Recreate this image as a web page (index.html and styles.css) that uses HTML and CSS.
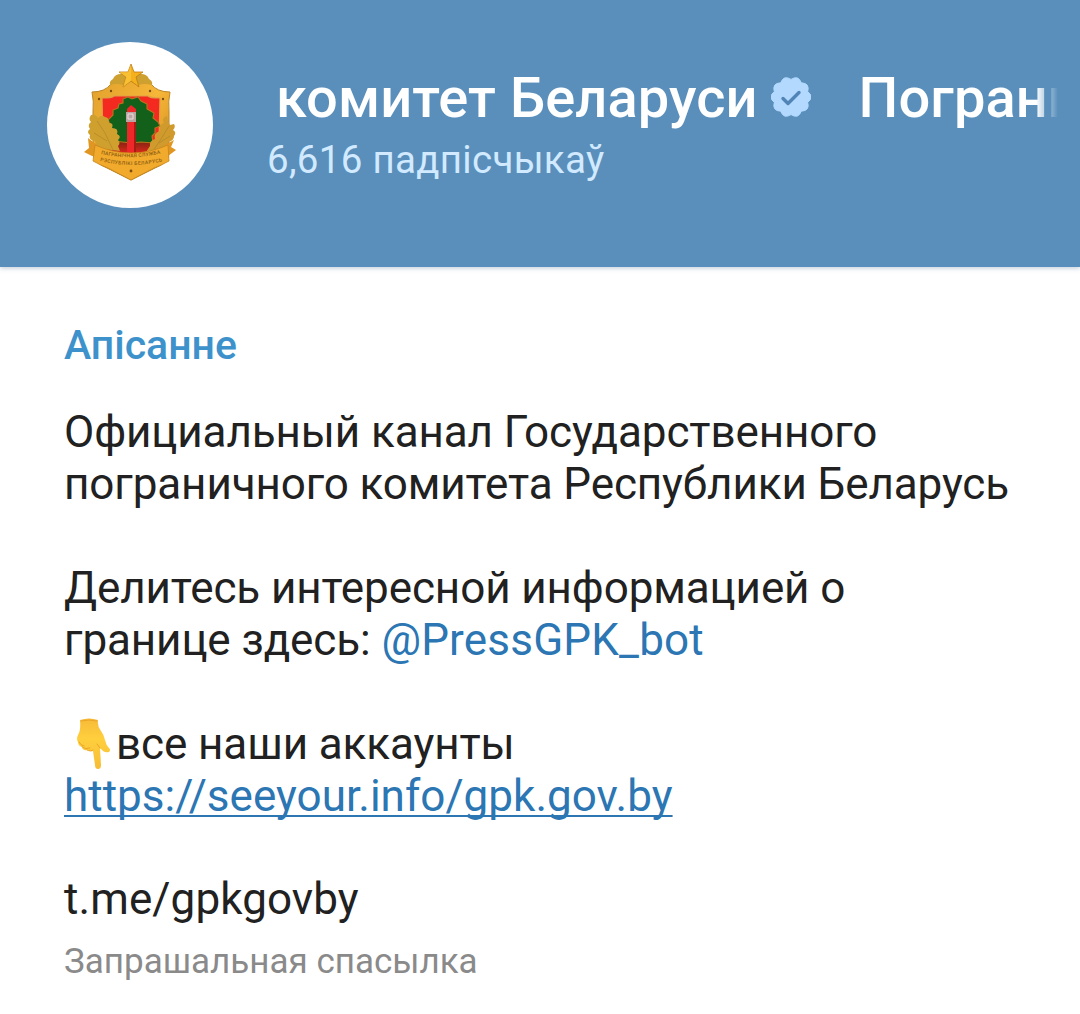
FILE: index.html
```html
<!DOCTYPE html>
<html lang="be">
<head>
  <meta charset="UTF-8" />
  <meta name="viewport" content="width=device-width, initial-scale=1.0" />
  <title>Пограничный комитет Беларуси</title>
  <link rel="stylesheet" href="styles.css">
</head>
<body>
  <header class="header">
    <svg class="avatar" viewBox="0 0 166 166">
      <defs>
        <linearGradient id="gold" x1="0" y1="0" x2="1" y2="1">
          <stop offset="0" stop-color="#e0a02c" />
          <stop offset="0.5" stop-color="#f6b638" />
          <stop offset="1" stop-color="#c98218" />
        </linearGradient>
        <linearGradient id="ground" x1="0" y1="0" x2="0" y2="1">
          <stop offset="0" stop-color="#7c2410" />
          <stop offset="1" stop-color="#e5281c" />
        </linearGradient>
      </defs>
      <circle cx="83" cy="83" r="83" fill="#fff" />
      <!-- shield -->
      <path d="M64 42q10-7 20-7t20 7q6 8 19 8-2 9-1 20v42q-1 9-14 14l-24 12-24-12q-13-5-14-14V70q1-11-1-20 13 0 19-8z" fill="url(#gold)" stroke="#b98528" stroke-width="1" />
      <path d="M63 43q-1-4 3-6 2-5 8-5 4-2 7 2l5 0q4-4 8-2 6 0 8 5 4 2 3 6-8-2-13 0l-8-3-8 3q-6-2-13 0z" fill="#cda030" />
      <path d="M67 54H101q2 2 12 2l-1 44q-3 6-6 10H63q-6-4-7-10L55 56q10 0 12-2z" fill="#f42a20" stroke="#dfa047" stroke-width="1.2" />
      <path d="M62 100l12-1h22l14 2-7 11H66z" fill="url(#ground)" />
      <path d="M76 57l5-2 4 2 6-2 3 4 6 3 0 5 7 4-1 5 5 4 2 4-5 2 0 5-3 3 1 7-12-1-10 1-17-2-2-8-5-4 3-5-2-4 5-5 0-5 5-2 1-4 4-1z" fill="#12601a" stroke="#b8741c" stroke-width="1.1" />
      <path d="M80 112V67l4-4 5 4v45z" fill="#ee2828" />
      <path d="M87 80h2v32h-2z" fill="#a81a14" />
      <path d="M79 70h10v10H79z" fill="#bba5a2" />
      <path d="M81 72h5v5h-5z" fill="none" stroke="#e8dedc" />
      <!-- oak leaves -->
      <path d="M44 73q5-1 7 3 3-4 7-1 4 0 4 6 5 0 3 5 7 0 5 6 5 2 1 6 3 3 0 6l2 5-17-2q-8-2-8-8-7-1-5-6-4-3 0-6-3-4 1-7-3-3 0-7z" fill="#d0a02e" />
      <path d="M120 74q-6 2-3 7-6 2-4 8-7 2-5 8-6 2-5 7l-4 6 16-2q6-3 6-8 6-1 6-6 3-4-1-6 3-3 1-6l-4 1q-3-4-3-9z" fill="#d09a2d" />
      <path d="M50 79l8 12 8 17M47 91l13 8M122 84l-8 13-8 12M123 94l-11 7" stroke="#b98e2a" stroke-width="1" fill="none" />
      <!-- ribbon -->
      <path d="M41 96l9 7 6 12-11-1-8-4 5-4zM127 98l-9 5-6 12 9-1 8-6-5-3z" fill="#e19622" />
      <path d="M48 103q36 16 73 0l1 16q-7 4-15 7l-23 12-23-12q-8-3-15-7z" fill="#f2aa2d" stroke="#c7851d" stroke-width="0.8" />
      <path id="line-top" d="M54 112q30 7 61-1" fill="none" />
      <path id="line-bottom" d="M53 119q31 8 64 0" fill="none" />
      <text class="ribbon-text"><textPath href="#line-top" textLength="60">ПАГРАНІЧНАЯ СЛУЖБА</textPath></text>
      <text class="ribbon-text"><textPath href="#line-bottom" textLength="63">РЭСПУБЛІКІ БЕЛАРУСЬ</textPath></text>
      <!-- star and studs -->
      <path d="M84 22l3 8h9l-7 5 3 10-8-6-8 6 3-10-7-5h9z" fill="#f5b11d" stroke="#bd7a12" stroke-width="0.8" />
      <path d="M84 22v17l-8 6 3-10-7-5h9z" fill="#ffd04a" opacity="0.5" />
      <g fill="#7b4d12">
        <circle cx="64" cy="49" r="1.2" /><circle cx="103" cy="49" r="1.2" />
        <circle cx="52" cy="57" r="1.2" /><circle cx="116" cy="57" r="1.2" />
        <circle cx="84" cy="129" r="1.4" />
      </g>
    </svg>

    <div class="info">
      <div class="title">
        <span>комитет Беларуси</span>
        <svg class="verified" viewBox="0 0 40 40">
          <path d="M20 2.400Q27.300-2.300 30.300 5.800Q39 6.200 36.700 14.600Q43.500 20 36.700 25.400Q39 33.800 30.300 34.200Q27.300 42.300 20 37.600Q12.700 42.300 9.700 34.200Q1 33.800 3.300 25.400Q-3.500 20 3.300 14.600Q1 6.200 9.700 5.800Q12.700-2.300 20 2.400z" fill="#b3d9ff" stroke="#b3d9ff" stroke-linejoin="round" />
          <path d="M12 21.500l5 5L28 15.500" fill="none" stroke="#5185b8" stroke-width="3.400" stroke-linecap="round" stroke-linejoin="round" />
        </svg>
        <span>Пограничный</span>
      </div>
      <div class="subscribers">6,616 падпісчыкаў</div>
    </div>
  </header>

  <main class="content">
    <h2>Апісанне</h2>
    <div class="description">
      <p>Официальный канал Государственного<br>пограничного комитета Республики Беларусь</p>
      <p>Делитесь интересной информацией о<br>границе здесь: <a class="mention" href="#">@PressGPK_bot</a></p>
      <p>
        <svg class="hand" viewBox="0 0 52 52">
          <defs>
            <linearGradient id="skin" x1="0" y1="0" x2="0" y2="1">
              <stop offset="0" stop-color="#f7ba38" />
              <stop offset="0.4" stop-color="#ffcf3d" />
              <stop offset="1" stop-color="#f6bd35" />
            </linearGradient>
          </defs>
          <path d="M16 2Q25-1 34 2q-1 6 3 11 3 4 4 9 1 5 4 8 2 2 0 4-3 1-6-1l-3-3 1 17q0 4-3 4t-3-4l-2-14q-3 1-6-1-4 1-5-3-4-1-4-5-2-3 0-7 3-5 2-15z" fill="url(#skin)" />
          <path d="M15 24q2 4 5 4M18 29q4 3 8 1M23 32q4 2 6 0M36 30l-3-4M17 3q8-2 16 0" fill="none" stroke="#e8a126" stroke-width="0.900" stroke-linecap="round" />
        </svg>все наши аккаунты<br>
        <a class="link" href="#">https://seeyour.info/gpk.gov.by</a>
      </p>
    </div>
    <div class="invite">t.me/gpkgovby</div>
    <div class="hint">Запрашальная спасылка</div>
  </main>
</body>
</html>
```
FILE: styles.css
```css
* {
  box-sizing: border-box;
}
body {
  margin: 0;
  font-family: Roboto, "Noto Sans", sans-serif;
  background-color: #fff;
  color: #212121;
}
.header {
  display: flex;
  height: 267px;
  padding: 42px 20px 0 47px;
  background-color: #5a8fbb;
  box-shadow: 0 1px 5px rgba(70, 100, 140, 0.35);
}
.avatar {
  flex: none;
  width: 166px;
  height: 166px;
}
.ribbon-text {
  font-size: 5px;
  font-weight: 500;
  fill: #8a5c10;
}
.info {
  flex: 1;
  min-width: 0;
  margin-left: 54px;
  padding-top: 23px;
}
.title {
  display: flex;
  align-items: center;
  height: 66px;
  padding-left: 9px;
  overflow: hidden;
  white-space: nowrap;
  font-size: 56px;
  font-weight: 500;
  line-height: 66px;
  letter-spacing: 0.1px;
  color: #fff;
  -webkit-mask-image: linear-gradient(to right, transparent, #000 14px, #000 calc(100% - 24px), transparent calc(100% - 2px));
  mask-image: linear-gradient(to right, transparent, #000 14px, #000 calc(100% - 24px), transparent calc(100% - 2px));
}
.verified {
  flex: none;
  width: 40px;
  height: 40px;
  margin: -2px 48px 0 13px;
}
.subscribers {
  margin-top: 6px;
  font-size: 38.5px;
  line-height: 46px;
  letter-spacing: 0.3px;
  color: #d1eaff;
}
.content {
  padding: 54px 0 0 64px;
}
h2 {
  margin: 0;
  font-size: 41px;
  font-weight: 500;
  line-height: 48px;
  color: #3e92cc;
}
.description {
  padding-top: 37px;
  letter-spacing: -0.1px;
}
.description p {
  margin: 0 0 52px;
}
.description, .invite {
  font-size: 44px;
  line-height: 52px;
  white-space: nowrap;
}
.invite {
  margin-top: -1px;
  letter-spacing: 0.1px;
}
a {
  color: #2b76b3;
  text-decoration: none;
}
.mention {
  letter-spacing: 0.2px;
}
.link {
  letter-spacing: 0.03px;
  text-decoration: underline;
  text-decoration-thickness: 2px;
  text-underline-offset: 4px;
  text-decoration-skip-ink: none;
}
.hand {
  width: 52px;
  height: 52px;
  margin: -12px 0;
  vertical-align: 1px;
}
.hint {
  margin-top: 15px;
  font-size: 35px;
  line-height: 44px;
  color: #8a8a8a;
}
```
